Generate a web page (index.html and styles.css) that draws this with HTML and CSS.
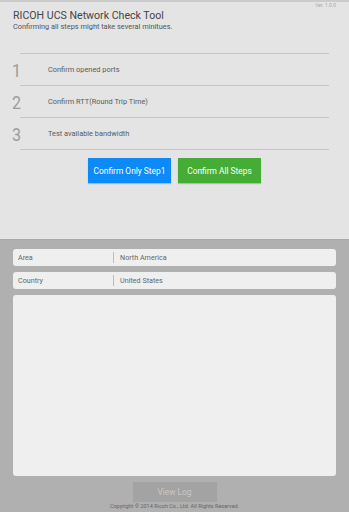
FILE: index.html
```html
<!DOCTYPE html>
<html>
<head>
<meta charset="utf-8">
<meta name="viewport" content="width=device-width, initial-scale=1.0">
<title>RICOH UCS Network Check Tool</title>
<link rel="stylesheet" href="styles.css">
</head>
<body>
<div class="top">
<div class="ver">Ver. 1.0.0</div>
<h1 class="title">RICOH UCS Network Check Tool</h1>
<p class="subtitle">Confirming all steps might take several minitues.</p>
<div class="steps">
<div class="rule"></div>
<div class="step"><span class="num">1</span><span class="label">Confirm opened ports</span></div>
<div class="rule"></div>
<div class="step"><span class="num">2</span><span class="label">Confirm RTT(Round Trip Time)</span></div>
<div class="rule"></div>
<div class="step"><span class="num">3</span><span class="label">Test available bandwidth</span></div>
<div class="rule"></div>
</div>
<div class="actions">
<button class="btn btn-blue">Confirm Only Step1</button>
<button class="btn btn-green">Confirm All Steps</button>
</div>
</div>
<div class="bottom">
<div class="field"><span class="key">Area</span><span class="sep"></span><span class="val">North America</span></div>
<div class="field"><span class="key">Country</span><span class="sep"></span><span class="val">United States</span></div>
<div class="log"></div>
<div class="foot">
<button class="btn-log">View Log</button>
<div class="copy">Copyright © 2014 Ricoh Co., Ltd. All Rights Reserved.</div>
</div>
</div>
</body>
</html>
```
FILE: styles.css
```css
html, body {
  margin: 0;
  padding: 0;
}
body {
  font-family: Roboto, "Noto Sans", sans-serif;
  width: 349px;
  height: 512px;
  overflow: hidden;
  background: #b0b0b0;
}
*, *:before, *:after { box-sizing: border-box; }

.top {
  height: 240px;
  background: #e4e4e4;
  border-top: 2px solid #cbcbcb;
  border-bottom: 1px solid #a9a9a9;
}
.ver {
  font-size: 5px;
  line-height: 7px;
  color: #a8a8a8;
  text-align: right;
  padding-right: 13px;
}
.title {
  margin: 0;
  padding-left: 13px;
  font-size: 10.6px;
  line-height: 13px;
  font-weight: normal;
  color: #454545;
}
.subtitle {
  margin: 0;
  padding-left: 13px;
  font-size: 7.4px;
  line-height: 9px;
  color: #555;
}

.steps { margin-top: 22px; }
.rule {
  height: 1px;
  margin: 0 20px;
  background: #c6c6c6;
}
.step {
  display: flex;
  align-items: center;
  height: 31px;
  padding-left: 12px;
}
.num {
  width: 36px;
  font-size: 19px;
  font-weight: normal;
  color: #9c9c9c;
  line-height: 1;
  padding-top: 2px;
  transform: scaleX(.85);
  transform-origin: left center;
}
.label {
  font-size: 7.4px;
  color: #5a5a5a;
}

.actions {
  display: flex;
  justify-content: center;
  gap: 7px;
  margin-top: 8px;
}
.btn {
  width: 83px;
  height: 25px;
  border: 0;
  padding: 0;
  font-family: inherit;
  font-size: 8.4px;
  color: #fff;
  box-shadow: 0 1px 1px rgba(0, 0, 0, .2);
}
.btn-blue { background: #0b8af8; }
.btn-green { background: #45ad35; }

.bottom {
  display: flex;
  flex-direction: column;
  gap: 6px;
  padding: 9px 13px 0 13px;
}
.field {
  display: flex;
  align-items: center;
  height: 17px;
  background: #efefef;
  border-radius: 3px;
  font-size: 7.2px;
  color: #666;
}
.key {
  width: 100px;
  padding-left: 5px;
}
.sep {
  width: 1px;
  height: 11px;
  background: #bdbdbd;
}
.val { padding-left: 6px; }
.log {
  height: 181px;
  background: #efefef;
  border-radius: 3px;
}
.foot {
  display: flex;
  flex-direction: column;
  align-items: center;
}
.btn-log {
  width: 84px;
  height: 20px;
  border: 0;
  padding: 0;
  background: #a3a3a3;
  color: #c8c8c8;
  font-family: inherit;
  font-size: 8.4px;
}
.copy {
  font-size: 5.5px;
  line-height: 9px;
  color: #666;
}
```
